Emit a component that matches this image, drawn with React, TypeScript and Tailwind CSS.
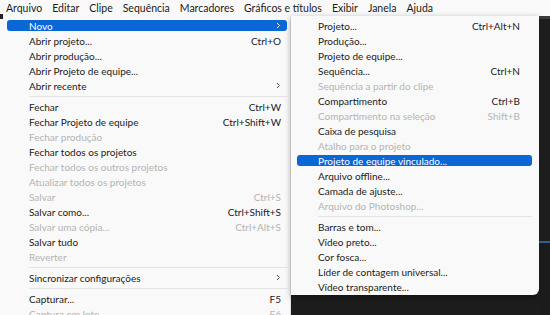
type Item = {
  label: string;
  shortcut?: string;
  disabled?: boolean;
  active?: boolean;
  sub?: boolean;
  sep?: boolean;
};

const mainItems: Item[] = [
  { label: "Novo", active: true, sub: true },
  { label: "Abrir projeto...", shortcut: "Ctrl+O" },
  { label: "Abrir produção..." },
  { label: "Abrir Projeto de equipe..." },
  { label: "Abrir recente", sub: true },
  { label: "", sep: true },
  { label: "Fechar", shortcut: "Ctrl+W" },
  { label: "Fechar Projeto de equipe", shortcut: "Ctrl+Shift+W" },
  { label: "Fechar produção", disabled: true },
  { label: "Fechar todos os projetos" },
  { label: "Fechar todos os outros projetos", disabled: true },
  { label: "Atualizar todos os projetos", disabled: true },
  { label: "Salvar", shortcut: "Ctrl+S", disabled: true },
  { label: "Salvar como...", shortcut: "Ctrl+Shift+S" },
  { label: "Salvar uma cópia...", shortcut: "Ctrl+Alt+S", disabled: true },
  { label: "Salvar tudo" },
  { label: "Reverter", disabled: true },
  { label: "", sep: true },
  { label: "Sincronizar configurações", sub: true },
  { label: "", sep: true },
  { label: "Capturar...", shortcut: "F5" },
  { label: "Captura em lote", shortcut: "F6", disabled: true },
];

const newItems: Item[] = [
  { label: "Projeto...", shortcut: "Ctrl+Alt+N" },
  { label: "Produção..." },
  { label: "Projeto de equipe..." },
  { label: "Sequência...", shortcut: "Ctrl+N" },
  { label: "Sequência a partir do clipe", disabled: true },
  { label: "Compartimento", shortcut: "Ctrl+B" },
  { label: "Compartimento na seleção", shortcut: "Shift+B", disabled: true },
  { label: "Caixa de pesquisa" },
  { label: "Atalho para o projeto", disabled: true },
  { label: "Projeto de equipe vinculado...", active: true },
  { label: "Arquivo offline..." },
  { label: "Camada de ajuste..." },
  { label: "Arquivo do Photoshop...", disabled: true },
  { label: "", sep: true },
  { label: "Barras e tom..." },
  { label: "Vídeo preto..." },
  { label: "Cor fosca..." },
  { label: "Líder de contagem universal..." },
  { label: "Vídeo transparente..." },
];

const menubar = ["Arquivo", "Editar", "Clipe", "Sequência", "Marcadores", "Gráficos e títulos", "Exibir", "Janela", "Ajuda"];

function Chevron({ white }: { white?: boolean }) {
  return (
    <svg width="5" height="7" viewBox="0 0 5 7" className="shrink-0">
      <path d="M1 1 L3.5 3.5 L1 6" fill="none" stroke={white ? "#ffffff" : "#555555"} strokeWidth="1" />
    </svg>
  );
}

function Row({ item, indent, right }: { item: Item; indent: string; right: string }) {
  if (item.sep) {
    return (
      <div className={`h-[6px] flex items-center ${indent}`}>
        <div className="h-px w-full bg-[#e4e4e4]" />
      </div>
    );
  }
  const text = item.active ? "text-white" : item.disabled ? "text-[#b4b4b4]" : "text-[#1b1b1b]";
  return (
    <div className="h-[15px] py-[2px]">
      <div
        className={`h-full flex items-center justify-between rounded-[3px] ${indent} ${right} ${
          item.active ? "bg-[#0b66d6]" : ""
        } ${text}`}
      >
        <span>{item.label}</span>
        {item.shortcut && <span>{item.shortcut}</span>}
        {item.sub && <Chevron white={item.active} />}
      </div>
    </div>
  );
}

export default function App() {
  return (
    <div
      className="w-[550px] h-[315px] overflow-hidden flex flex-col bg-[#1c1c1c] text-[10px] leading-none relative"
      style={{ fontFamily: 'Lato, "Noto Sans", sans-serif' }}
    >
      {/* menu bar */}
      <div className="h-[16px] shrink-0 bg-[#f9f9f9] flex items-center gap-[10px] pl-[6px] text-[10.5px] text-[#1b1b1b]">
        {menubar.map((m) => (
          <span key={m}>{m}</span>
        ))}
      </div>

      <div className="flex-1 flex items-start">
        {/* Arquivo menu */}
        <div className="w-[291px] h-full shrink-0 bg-[#f9f9f9] pt-[2px] pl-[7px] pr-[3px] border-r border-[#e2e2e2]">
          {mainItems.map((it, i) => (
            <Row key={i} item={it} indent={it.sep ? "ml-[22px] mr-0" : "pl-[22px]"} right="pr-[6px]" />
          ))}
        </div>

        {/* Novo submenu */}
        <div className="w-[248px] shrink-0 bg-[#f9f9f9] pt-[2px] pb-[1px] pl-[6px] pr-[7px] rounded-br-[6px] shadow-[0_2px_6px_rgba(0,0,0,0.35)]">
          {newItems.map((it, i) => (
            <Row key={i} item={it} indent={it.sep ? "ml-[21px]" : "pl-[21px]"} right="pr-[12px]" />
          ))}
        </div>

        {/* dark app area on the right */}
        <div className="flex-1 self-stretch flex flex-col">
          <div className="h-[3px] bg-[#3a3a3a]" />
          <div className="h-[222px] bg-[#1d1d1d]" />
          <div className="h-[2px] bg-[#2f5f8f]" />
          <div className="flex-1 bg-[#1b1b1b]" />
        </div>
      </div>

      {/* cursor corner */}
      <div className="absolute left-0 top-[14px] w-[3px] h-[5px] bg-[#222]" />
    </div>
  );
}
